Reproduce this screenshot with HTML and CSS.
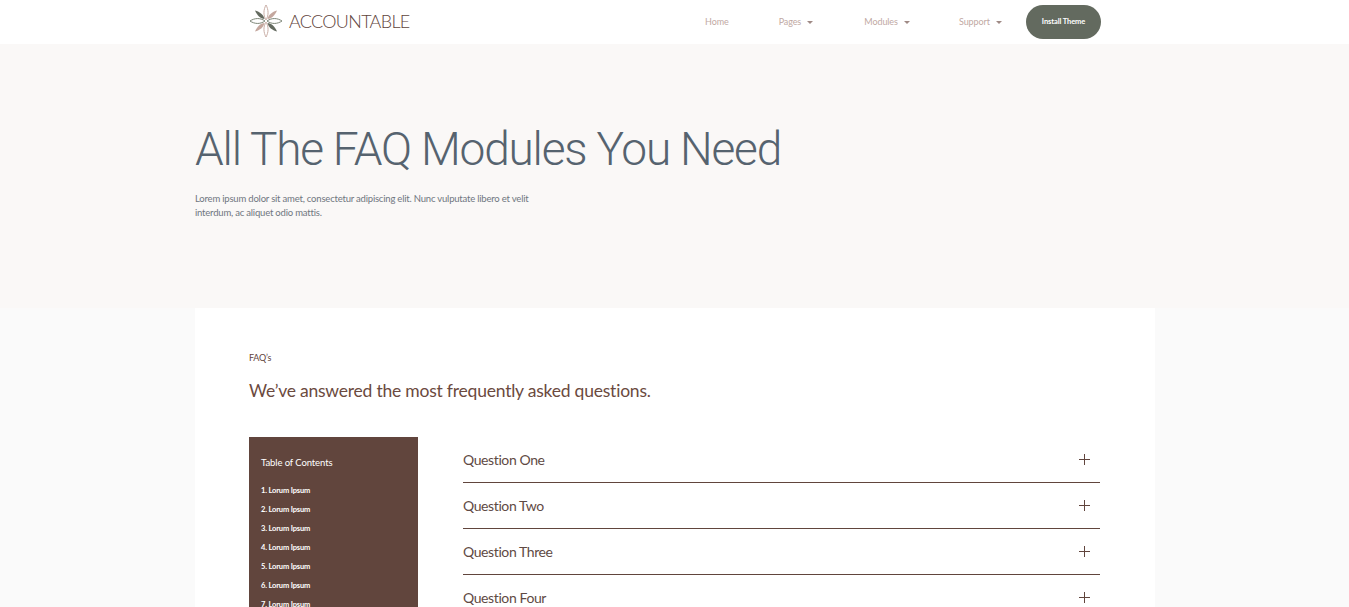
FILE: index.html
```html
<!DOCTYPE html>
<html lang="en">
<head>
    <meta charset="UTF-8">
    <meta name="viewport" content="width=device-width, initial-scale=1.0">
    <title>Accountable - FAQ Modules</title>
    <link rel="stylesheet" href="styles.css">
</head>
<body>
    <header class="site-header">
        <div class="header-inner">
            <a class="brand" href="#">
                <svg class="brand-mark" width="34" height="34" viewBox="0 0 34 34" aria-hidden="true">
                    <path d="M17 16C14 11 14.500 5.500 17 1C19.500 5.500 20 11 17 16Z" fill="none" stroke="#c9aea6" stroke-width="1"/>
                    <path d="M17 18C14 23 14.500 28.500 17 33C19.500 28.500 20 23 17 18Z" fill="none" stroke="#c9aea6" stroke-width="1"/>
                    <path d="M15.500 15C11.500 14.500 8 11.500 6 6.500C11 8 14.500 10.500 15.500 15Z" fill="#636a5f"/>
                    <path d="M18.500 15C22.500 14.500 26 11.500 28 6.500C23 8 19.500 10.500 18.500 15Z" fill="#c4a79e"/>
                    <path d="M15.500 19C11.500 19.500 8 22.500 6 27.500C11 26 14.500 23.500 15.500 19Z" fill="#c4a79e"/>
                    <path d="M18.500 19C22.500 19.500 26 22.500 28 27.500C23 26 19.500 23.500 18.500 19Z" fill="#636a5f"/>
                    <path d="M16 17C11 13.500 5.500 14 1 17C5.500 20 11 20.500 16 17Z" fill="none" stroke="#7d8678" stroke-width="1"/>
                    <path d="M18 17C23 13.500 28.500 14 33 17C28.500 20 23 20.500 18 17Z" fill="none" stroke="#7d8678" stroke-width="1"/>
                </svg>
                <span class="brand-name">ACCOUNTABLE</span>
            </a>
            <nav class="main-nav">
                <a class="nav-link nav-home" href="#">Home</a>
                <a class="nav-link nav-pages" href="#">Pages <span class="caret"></span></a>
                <a class="nav-link nav-modules" href="#">Modules <span class="caret"></span></a>
                <a class="nav-link nav-support" href="#">Support <span class="caret"></span></a>
                <a class="install-btn" href="#">Install Theme</a>
            </nav>
        </div>
    </header>

    <section class="hero">
        <h1>All The FAQ Modules You Need</h1>
        <p>Lorem ipsum dolor sit amet, consectetur adipiscing elit. Nunc vulputate libero et velit interdum, ac aliquet odio mattis.</p>
    </section>

    <main class="faq-card">
        <p class="eyebrow">FAQ’s</p>
        <h2>We’ve answered the most frequently asked questions.</h2>
        <div class="faq-columns">
            <aside class="toc">
                <h3>Table of Contents</h3>
                <ol class="toc-list">
                    <li>1. Lorum Ipsum</li>
                    <li>2. Lorum Ipsum</li>
                    <li>3. Lorum Ipsum</li>
                    <li>4. Lorum Ipsum</li>
                    <li>5. Lorum Ipsum</li>
                    <li>6. Lorum Ipsum</li>
                    <li>7. Lorum Ipsum</li>
                </ol>
            </aside>
            <div class="accordion">
                <div class="question"><span>Question One</span><span class="plus"></span></div>
                <div class="question"><span>Question Two</span><span class="plus"></span></div>
                <div class="question"><span>Question Three</span><span class="plus"></span></div>
                <div class="question"><span>Question Four</span><span class="plus"></span></div>
            </div>
        </div>
    </main>
</body>
</html>
```

FILE: styles.css
```css
html, body {
    height: 100%;
    overflow: hidden;
}
body {
    margin: 0;
    background-color: #fafafa;
    font-family: "Lato", "Liberation Sans", sans-serif;
    color: #5f443c;
}
a {
    text-decoration: none;
    color: inherit;
}
.site-header {
    height: 44px;
    background-color: white;
}
.header-inner {
    width: 852px;
    height: 44px;
    margin-left: 249px;
    display: flex;
    align-items: center;
    justify-content: space-between;
}
.brand {
    display: flex;
    align-items: center;
    gap: 6px;
    margin-bottom: 2px;
}
.brand-name {
    font-size: 18px;
    font-weight: 300;
    color: #5f443c;
    letter-spacing: -0.7px;
}
.main-nav {
    display: flex;
    align-items: center;
}
.nav-link {
    font-size: 9px;
    letter-spacing: -0.1px;
    color: #bfa9a3;
    margin-bottom: 2px;
}
.nav-home { margin-right: 50px; }
.nav-pages { margin-right: 51px; }
.nav-modules { margin-right: 49px; }
.nav-support { margin-right: 24px; }
.caret {
    display: inline-block;
    margin-left: 4px;
    vertical-align: middle;
    border-top: 3px solid #9f8a85;
    border-left: 3px solid transparent;
    border-right: 3px solid transparent;
}
.install-btn {
    width: 75px;
    height: 34px;
    border-radius: 17px;
    background-color: #636a5f;
    color: white;
    font-size: 7.5px;
    font-weight: 700;
    letter-spacing: -0.1px;
    padding-bottom: 2px;
    box-sizing: border-box;
    display: flex;
    align-items: center;
    justify-content: center;
}
.hero {
    height: 264px;
    box-sizing: border-box;
    padding: 77px 0 0 195px;
    background-color: #faf8f7;
}
.hero h1 {
    margin: 0;
    font-family: "Roboto", "Liberation Sans", sans-serif;
    font-size: 46px;
    line-height: 56px;
    font-weight: 300;
    letter-spacing: -1.2px;
    color: #56636f;
}
.hero p {
    width: 350px;
    margin: 15px 0 0;
    font-size: 9.5px;
    line-height: 14px;
    letter-spacing: -0.2px;
    color: #6f7680;
}
.faq-card {
    width: 852px;
    height: 400px;
    margin-left: 195px;
    padding: 44px 54px 0;
    background-color: white;
}
.eyebrow {
    margin: 0;
    font-size: 9px;
    line-height: 12px;
    letter-spacing: -0.2px;
    color: #5f443c;
}
.faq-card h2 {
    margin: 14px 0 0;
    font-size: 17.5px;
    line-height: 26px;
    font-weight: 400;
    letter-spacing: -0.22px;
    color: #6b4a40;
}
.faq-columns {
    display: flex;
    gap: 45px;
    margin-top: 33px;
}
.toc {
    width: 169px;
    height: 300px;
    box-sizing: border-box;
    padding: 20px 12px;
    background-color: #61453d;
    color: white;
}
.toc h3 {
    margin: 0 0 12px;
    font-size: 9.5px;
    line-height: 12px;
    font-weight: 400;
    letter-spacing: -0.1px;
}
.toc-list {
    margin: 0;
    padding: 0;
    list-style: none;
    font-size: 7.5px;
    font-weight: 700;
    letter-spacing: -0.15px;
}
.toc-list li {
    height: 19px;
    line-height: 19px;
}
.accordion {
    width: 637px;
}
.question {
    height: 45px;
    border-bottom: 1px solid #61453d;
    display: flex;
    align-items: center;
    justify-content: space-between;
    font-size: 14px;
    letter-spacing: -0.4px;
    color: #5f4a44;
}
.plus {
    position: relative;
    width: 11px;
    height: 11px;
    margin-right: 10px;
}
.plus::before, .plus::after {
    content: "";
    position: absolute;
    background-color: #61453d;
}
.plus::before {
    left: 0;
    top: 5px;
    width: 11px;
    height: 1px;
}
.plus::after {
    left: 5px;
    top: 0;
    width: 1px;
    height: 11px;
}
```
